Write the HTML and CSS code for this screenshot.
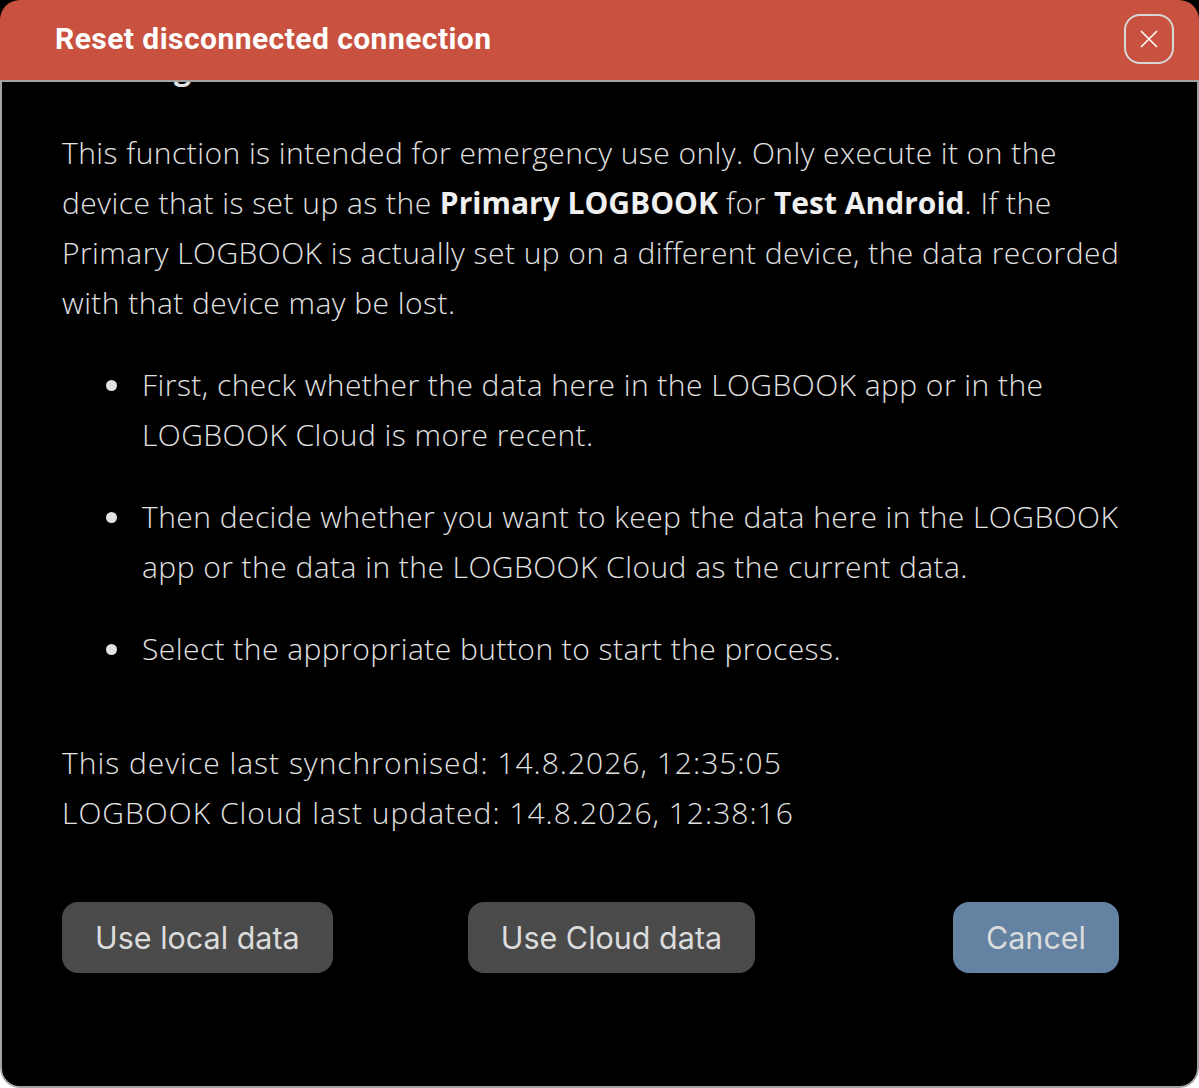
FILE: index.html
```html
<!DOCTYPE html>
<html lang="en">
<head>
  <meta charset="UTF-8">
  <meta name="viewport" content="width=device-width, initial-scale=1.0">
  <title>Reset disconnected connection</title>
  <link rel="stylesheet" href="styles.css">
</head>
<body>
  <div class="dialog">
    <div class="dialog-header">
      <h1>Reset disconnected connection</h1>
      <button class="close-btn" aria-label="Close">
        <svg width="18" height="18" viewBox="0 0 18 18">
          <path d="M1 1L17 17M17 1L1 17" stroke="#fff" stroke-width="1.6" fill="none"/>
        </svg>
      </button>
    </div>

    <div class="dialog-body">
      <div class="content">
        <h2>Warning</h2>
        <p>This function is intended for emergency use only. Only execute it on the device that is set up as the <strong>Primary LOGBOOK</strong> for <strong>Test Android</strong>. If the Primary LOGBOOK is actually set up on a different device, the data recorded with that device may be lost.</p>

        <ul class="steps">
          <li>First, check whether the data here in the LOGBOOK app or in the LOGBOOK Cloud is more recent.</li>
          <li>Then decide whether you want to keep the data here in the LOGBOOK app or the data in the LOGBOOK Cloud as the current data.</li>
          <li>Select the appropriate button to start the process.</li>
        </ul>

        <div class="sync-info">
          <div>This device last synchronised: 14.8.2026, 12:35:05</div>
          <div>LOGBOOK Cloud last updated: 14.8.2026, 12:38:16</div>
        </div>

        <div class="actions">
          <button class="btn btn-local">Use local data</button>
          <button class="btn btn-cloud">Use Cloud data</button>
          <button class="btn btn-cancel">Cancel</button>
        </div>
      </div>
    </div>
  </div>
</body>
</html>
```

FILE: styles.css
```css
* {
  margin: 0;
  padding: 0;
  box-sizing: border-box;
}
html, body {
  height: 100%;
}
body {
  background: linear-gradient(#000 50%, #fff 50%);
  font-family: "Open Sans", Roboto, "Liberation Sans", sans-serif;
  overflow: hidden;
}
.dialog {
  width: 1199px;
  height: 1088px;
  display: flex;
  flex-direction: column;
  border-radius: 20px;
  overflow: hidden;
}
.dialog-header {
  height: 80px;
  flex: none;
  display: flex;
  align-items: center;
  justify-content: space-between;
  padding: 0 25px 4px 55px;
  background-color: #c8523f;
}
.dialog-header h1 {
  font-family: Roboto, "Liberation Sans", sans-serif;
  font-size: 30px;
  font-weight: 700;
  color: #fff;
  letter-spacing: 0.45px;
}
.close-btn {
  width: 50px;
  height: 50px;
  display: flex;
  align-items: center;
  justify-content: center;
  background: transparent;
  border: 2px solid #d6d6d6;
  border-radius: 16px;
  margin-top: 2px;
}
.dialog-body {
  flex: 1;
  background-color: #000;
  border: 2px solid #a3a3a3;
  border-radius: 0 0 20px 20px;
  overflow: hidden;
  padding: 0 60px;
}
.content {
  margin-top: -38px;
  color: #e2e2e2;
  font-size: 30px;
  font-weight: 300;
  line-height: 50px;
  letter-spacing: 0.45px;
}
.content h2 {
  font-size: 30px;
  font-weight: 700;
  line-height: 50px;
  margin-bottom: 34px;
}
.content strong {
  font-weight: 700;
  color: #f0f0f0;
  letter-spacing: 0;
}
.steps {
  list-style: none;
  margin: 32px 0 64px;
  padding-left: 44px;
  display: flex;
  flex-direction: column;
  gap: 32px;
}
.steps li {
  display: flex;
  gap: 25px;
}
.steps li::before {
  content: "";
  flex: none;
  width: 11px;
  height: 11px;
  margin-top: 20px;
  border-radius: 50%;
  background-color: #e2e2e2;
}
.sync-info {
  margin-bottom: 64px;
  letter-spacing: 1px;
}
.actions {
  display: flex;
  padding-right: 18px;
}
.btn {
  height: 71px;
  padding: 0 33px;
  border: none;
  border-radius: 16px;
  font-family: Inter, Roboto, sans-serif;
  font-size: 30.5px;
  font-weight: 400;
  letter-spacing: 0;
  color: #dcdcdc;
  background-color: #4a4a4a;
}
.btn-cloud {
  margin-left: 135px;
}
.btn-cancel {
  margin-left: auto;
  background-color: #6482a2;
}
```
